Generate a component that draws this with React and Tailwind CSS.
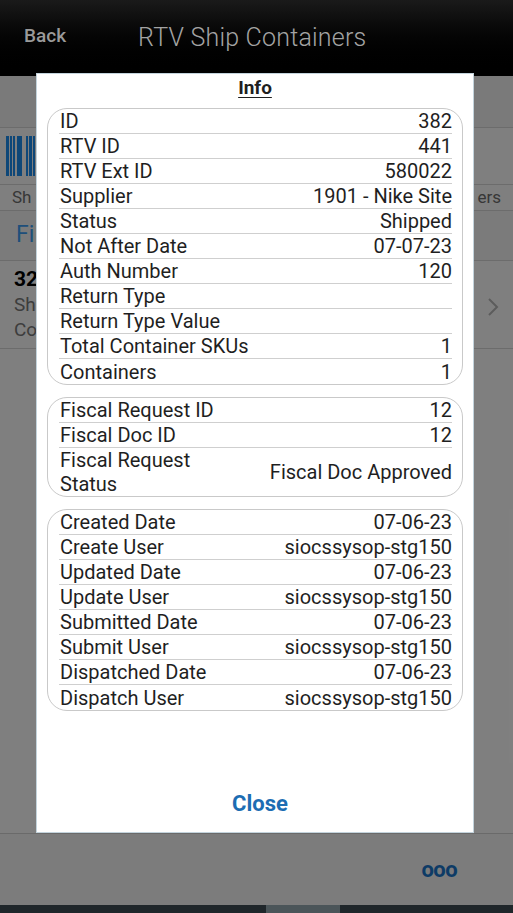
import React from 'react';

const mainRows = [
  ['ID', '382'],
  ['RTV ID', '441'],
  ['RTV Ext ID', '580022'],
  ['Supplier', '1901 - Nike Site'],
  ['Status', 'Shipped'],
  ['Not After Date', '07-07-23'],
  ['Auth Number', '120'],
  ['Return Type', ''],
  ['Return Type Value', ''],
  ['Total Container SKUs', '1'],
  ['Containers', '1'],
];

const fiscalRows = [
  ['Fiscal Request ID', '12'],
  ['Fiscal Doc ID', '12'],
  ['Fiscal Request Status', 'Fiscal Doc Approved', true],
];

const auditRows = [
  ['Created Date', '07-06-23'],
  ['Create User', 'siocssysop-stg150'],
  ['Updated Date', '07-06-23'],
  ['Update User', 'siocssysop-stg150'],
  ['Submitted Date', '07-06-23'],
  ['Submit User', 'siocssysop-stg150'],
  ['Dispatched Date', '07-06-23'],
  ['Dispatch User', 'siocssysop-stg150'],
];

function Barcode() {
  const bars = [0, 4, 7, 11, 14, 20, 23, 27, 31, 34, 38, 42];
  return (
    <svg width="50" height="40" viewBox="0 0 50 40">
      {bars.map((x, i) => (
        <rect key={i} x={x + 2} y="0" width={i % 3 === 0 ? 3 : 2} height="40" fill="#1c8ef0" />
      ))}
    </svg>
  );
}

function InfoGroup({ rows }) {
  return (
    <div className="border border-[#c9c9c9] rounded-[20px] pl-[11px] pr-[10px]">
      {rows.map(([label, value, wrap], i) => (
        <div
          key={label}
          className={`flex justify-between items-center gap-3 ${i < rows.length - 1 ? 'border-b border-[#cfcfcf]' : ''} ${wrap ? 'min-h-[48px]' : 'h-[25px]'}`}
        >
          <span className={`pl-px leading-[24px] ${wrap ? 'w-[150px]' : ''}`}>{label}</span>
          <span className="text-right leading-[24px] whitespace-nowrap">{value}</span>
        </div>
      ))}
    </div>
  );
}

export default function App() {
  return (
    <div className="relative w-[513px] h-[913px] overflow-hidden bg-white font-['Roboto',sans-serif]">

      {/* PAGE BEHIND THE DIALOG */}
      <div className="flex flex-col h-full">
        <div className="h-[76px] shrink-0 bg-gradient-to-b from-[#1a1a1a] to-black flex items-center gap-[72px] pl-6">
          <span className="text-[#9a9a9a] text-[19px] font-medium -mt-1">Back</span>
          <span className="text-[#a3a3a3] text-[25px] font-light tracking-[0.2px]">RTV Ship Containers</span>
        </div>

        <div className="h-[52px] shrink-0 bg-[#f5f5f5] border-b border-[#d8d8d8]" />

        <div className="h-[56px] shrink-0 bg-[#ffffff] flex items-center pl-1">
          <Barcode />
        </div>

        <div className="h-[27px] shrink-0 border-y border-[#d8d8d8] flex justify-between items-center px-3 text-[17px] text-[#6e6e6e]">
          <span>Sh</span>
          <span>ers</span>
        </div>

        <div className="h-[50px] shrink-0 flex items-center pl-4 text-[23px] text-[#3c9ef4] border-b border-[#d8d8d8] bg-[#f7f7f7]">
          Fi
        </div>

        <div className="h-[88px] shrink-0 flex items-center justify-between pl-[14px] pr-[14px] border-b border-[#d8d8d8]">
          <div className="flex flex-col leading-[25px]">
            <span className="text-[21px] font-bold text-black">32</span>
            <span className="text-[19px] text-[#7a7a7a]">Sh</span>
            <span className="text-[19px] text-[#7a7a7a]">Co</span>
          </div>
          <svg width="12" height="20" viewBox="0 0 12 20" className="mt-1">
            <path d="M2 2 L10 10 L2 18" fill="none" stroke="#b8b8b8" strokeWidth="2" />
          </svg>
        </div>

        <div className="flex-1" />

        <div className="h-[72px] shrink-0 border-t border-[#d4d4d4] flex items-center justify-end pr-[56px] bg-[#f8f8f8]">
          <span className="text-[22px] font-bold text-[#1a76cc] tracking-tight">ooo</span>
        </div>

        <div className="h-[8px] shrink-0 bg-[#1f262a] flex">
          <div className="ml-[266px] w-[74px] bg-[#4b5559]" />
        </div>
      </div>

      {/* DIM OVERLAY (header stays black) */}
      <div className="absolute left-0 right-0 top-[76px] bottom-[8px] bg-black/50" />

      {/* INFO DIALOG */}
      <div className="absolute left-[36px] top-[73px] w-[438px] h-[760px] bg-white border border-[#c3d3dc] flex flex-col text-[20px] text-[#1f1f1f]">
        <div className="text-center font-bold underline underline-offset-[3px] text-[19px] leading-[26px] mt-[1px]">Info</div>

        <div className="flex flex-col gap-[12px] mt-[7px] mx-[10px]">
          <InfoGroup rows={mainRows} />
          <InfoGroup rows={fiscalRows} />
          <InfoGroup rows={auditRows} />
        </div>

        <div className="flex-1 flex items-end justify-center pb-[13px] pl-[10px]">
          <button className="text-[22px] font-bold text-[#1c6db3] leading-[30px]">Close</button>
        </div>
      </div>

    </div>
  );
}
